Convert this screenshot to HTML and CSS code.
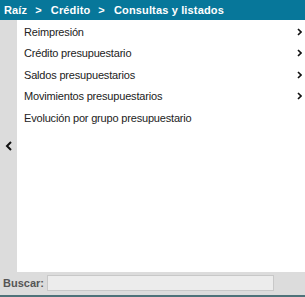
FILE: index.html
```html
<!DOCTYPE html>
<html>
<head>
  <title>Consultas y listados</title>
  <link rel="stylesheet" href="styles.css">
</head>
<body>
  <div class="panel">
    <div class="crumbs">
      <span>Raíz</span>
      <span class="sep">&gt;</span>
      <span>Crédito</span>
      <span class="sep">&gt;</span>
      <span>Consultas y listados</span>
    </div>
    <div class="main">
      <div class="side">
        <svg width="8" height="10" viewBox="0 0 8 10"><path d="M6 1L2 5l4 4" fill="none" stroke="#111" stroke-width="2"/></svg>
      </div>
      <ul class="menu">
        <li>Reimpresión <svg class="chev" width="5" height="8" viewBox="0 0 5 8"><path d="M1 1l3 3-3 3" fill="none" stroke="#111" stroke-width="1.6"/></svg></li>
        <li>Crédito presupuestario <svg class="chev" width="5" height="8" viewBox="0 0 5 8"><path d="M1 1l3 3-3 3" fill="none" stroke="#111" stroke-width="1.6"/></svg></li>
        <li>Saldos presupuestarios <svg class="chev" width="5" height="8" viewBox="0 0 5 8"><path d="M1 1l3 3-3 3" fill="none" stroke="#111" stroke-width="1.6"/></svg></li>
        <li>Movimientos presupuestarios <svg class="chev" width="5" height="8" viewBox="0 0 5 8"><path d="M1 1l3 3-3 3" fill="none" stroke="#111" stroke-width="1.6"/></svg></li>
        <li>Evolución por grupo presupuestario</li>
      </ul>
    </div>
    <div class="search">
      <label for="q">Buscar:</label>
      <input type="text" id="q" />
    </div>
  </div>
</body>
</html>
```

FILE: styles.css
```css
body {
  margin: 0;
  font-family: "Liberation Sans", Arial, sans-serif;
  background-color: #dcdcdc;
}

.panel {
  height: 297px;
  display: flex;
  flex-direction: column;
  border-bottom: 2px solid #4e7279;
  box-sizing: border-box;
}

.crumbs {
  height: 20px;
  background-color: #07779a;
  color: white;
  font-size: 11px;
  font-weight: bold;
  display: flex;
  align-items: center;
  padding-left: 4px;
  letter-spacing: 0.15px;
}

.crumbs .sep {
  margin: 0 9px 0 8px;
}

.main {
  flex: 1;
  display: flex;
}

.side {
  width: 17px;
  display: flex;
  align-items: center;
  justify-content: center;
}

.menu {
  flex: 1;
  background-color: white;
  list-style: none;
  margin: 0;
  padding: 1px 0 0 0;
}

.menu li {
  height: 21.5px;
  display: flex;
  align-items: center;
  justify-content: space-between;
  padding: 0 3px 0 7px;
  font-size: 11px;
  letter-spacing: -0.18px;
  color: #222;
}

.search {
  height: 22px;
  display: flex;
  align-items: center;
  padding: 0 31px 1px 3px;
}

.search label {
  font-size: 11px;
  font-weight: bold;
  color: #555;
  margin-right: 3px;
}

.search input {
  flex: 1;
  height: 16px;
  box-sizing: border-box;
  border: 1px solid #c8c8c8;
  background-color: #ececec;
  padding: 0 4px;
}
```
